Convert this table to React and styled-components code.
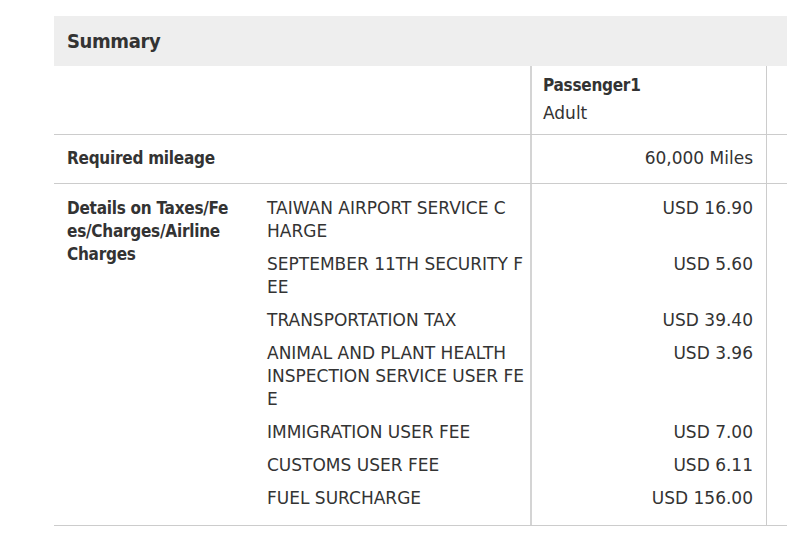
import React from "react";
import styled, { createGlobalStyle } from "styled-components";

const Global = createGlobalStyle`
  html, body { margin: 0; padding: 0; overflow: hidden; background: #fff; }
  body { font-family: "DejaVu Sans", Verdana, sans-serif; color: #333; }
`;

const COLS = "200px 276px 237px 120px";

const Page = styled.div`
  padding: 16px 0 0 54px;
  width: 900px;
`;

const SectionHead = styled.div`
  background: #eeeeee;
  height: 50px;
  display: flex;
  align-items: center;
  padding-left: 13px;
`;

const Title = styled.h2`
  margin: 0;
  font-family: "DejaVu Sans Condensed", "DejaVu Sans", sans-serif;
  font-stretch: condensed;
  font-weight: bold;
  font-size: 20px;
  letter-spacing: -0.4px;
  line-height: 26px;
  color: #333;
`;

const Row = styled.div`
  display: grid;
  grid-template-columns: ${COLS};
  border-bottom: 1px solid #cccccc;
  font-size: 17px;
  line-height: 23px;
`;

const Cell = styled.div`
  grid-column: ${(p) => p.$col || "auto"};
  grid-row: ${(p) => p.$row || "auto"};
  padding: ${(p) => p.$pad || "12px"} 13px ${(p) => p.$padB || p.$pad || "12px"} 13px;
  text-align: ${(p) => (p.$right ? "right" : "left")};
`;

const PaxCell = styled(Cell)`
  border-left: 2px solid #d4d4d4;
  border-right: 1px solid #cccccc;
  padding-left: 11px;
`;

const Bold = styled.div`
  font-family: "DejaVu Sans Condensed", "DejaVu Sans", sans-serif;
  font-stretch: condensed;
  font-weight: bold;
  font-size: 17px;
  letter-spacing: -0.25px;
  line-height: 23px;
  margin-bottom: ${(p) => p.$mb || "0"};
`;

const Line = styled.span`
  display: block;
  white-space: nowrap;
`;

const fees = [
  { name: ["TAIWAN AIRPORT SERVICE C", "HARGE"], value: "USD 16.90" },
  { name: ["SEPTEMBER 11TH SECURITY F", "EE"], value: "USD 5.60" },
  { name: ["TRANSPORTATION TAX"], value: "USD 39.40" },
  {
    name: ["ANIMAL AND PLANT HEALTH", "INSPECTION SERVICE USER FE", "E"],
    value: "USD 3.96",
  },
  { name: ["IMMIGRATION USER FEE"], value: "USD 7.00" },
  { name: ["CUSTOMS USER FEE"], value: "USD 6.11" },
  { name: ["FUEL SURCHARGE"], value: "USD 156.00" },
];

export default function App() {
  const n = fees.length;
  return (
    <>
      <Global />
      <Page>
        <SectionHead>
          <Title>Summary</Title>
        </SectionHead>

        <Row>
          <Cell $col="1 / 3" />
          <PaxCell $col="3" $pad="8px" $padB="9px">
            <Bold $mb="5px">Passenger1</Bold>
            <div>Adult</div>
          </PaxCell>
          <Cell $col="4" />
        </Row>

        <Row>
          <Cell $col="1 / 3" $padB="13px">
            <Bold>Required mileage</Bold>
          </Cell>
          <PaxCell $col="3" $padB="13px" $right>
            60,000 Miles
          </PaxCell>
          <Cell $col="4" />
        </Row>

        <Row>
          <Cell $col="1" $row={`1 / ${n + 1}`} $pad="13px">
            <Bold>
              <Line>Details on Taxes/Fe</Line>
              <Line>es/Charges/Airline</Line>
              <Line>Charges</Line>
            </Bold>
          </Cell>
          {fees.map((f, i) => {
            const top = i === 0 ? "13px" : "5px";
            const bot = i === n - 1 ? "15px" : "5px";
            return (
              <React.Fragment key={i}>
                <Cell $col="2" $row={`${i + 1}`} $pad={top} $padB={bot}>
                  {f.name.map((l, j) => (
                    <Line key={j}>{l}</Line>
                  ))}
                </Cell>
                <PaxCell $col="3" $row={`${i + 1}`} $pad={top} $padB={bot} $right>
                  {f.value}
                </PaxCell>
              </React.Fragment>
            );
          })}
        </Row>
      </Page>
    </>
  );
}
